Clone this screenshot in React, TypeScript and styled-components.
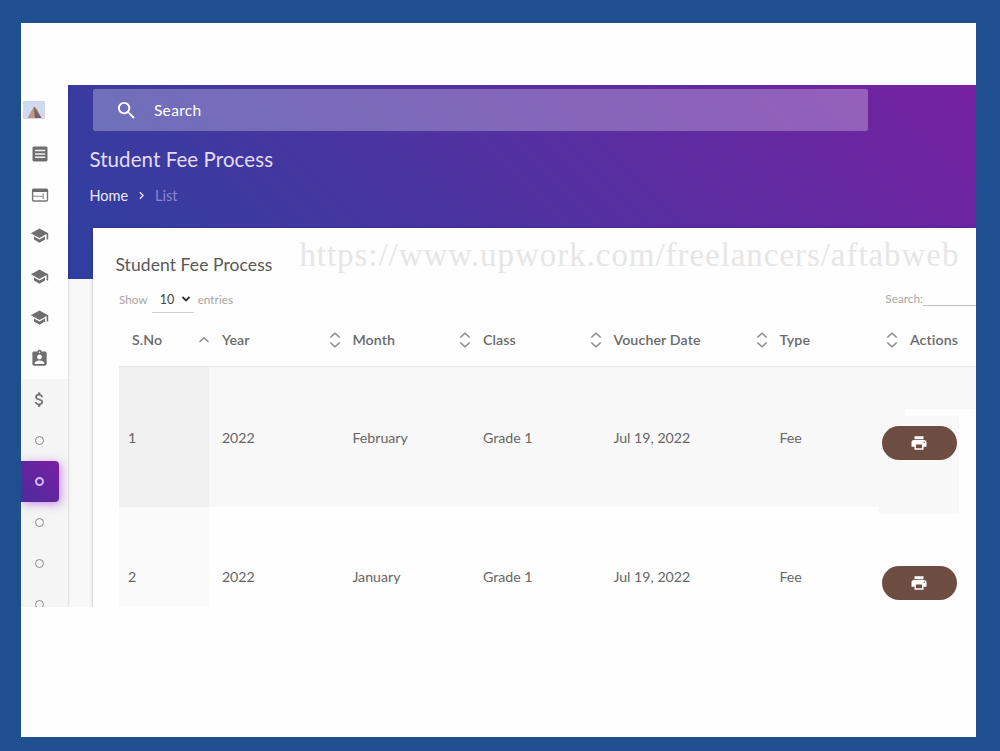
import styled, { createGlobalStyle } from 'styled-components';
import {
  MdSearch,
  MdSchool,
  MdAssignmentInd,
  MdAttachMoney,
  MdPrint,
  MdChevronRight,
} from 'react-icons/md';

const columns = ['S.No', 'Year', 'Month', 'Class', 'Voucher Date', 'Type', 'Actions'];

const rows = [
  { no: '1', year: '2022', month: 'February', grade: 'Grade 1', date: 'Jul 19, 2022', type: 'Fee' },
  { no: '2', year: '2022', month: 'January', grade: 'Grade 1', date: 'Jul 19, 2022', type: 'Fee' },
];

const ListIcon = () => (
  <svg width="18" height="18" viewBox="0 0 18 18">
    <rect x="1.5" y="1.5" width="15" height="15" rx="1.4" fill="#6f6f6f" />
    <path d="M4 5.5h10.2M4 8.9h10.2M4 12.3h10.2" stroke="#f4f4f4" strokeWidth="1.5" />
  </svg>
);

const LayoutIcon = () => (
  <svg width="18" height="18" viewBox="0 0 18 18">
    <rect x="1.6" y="3.2" width="14.9" height="11.8" rx="1.2" fill="none" stroke="#777" strokeWidth="1.4" />
    <path d="M1.2 4.6h15.6" stroke="#6c6c6c" strokeWidth="2.8" />
    <path d="M2 10.3h9.5M12.2 7.5v5.5" stroke="#888" strokeWidth="1.1" />
  </svg>
);

const Logo = () => (
  <svg width="22" height="18" viewBox="0 0 22 18">
    <rect width="22" height="18" fill="#cfdaef" />
    <path d="M4.5 17L11 5.5L14 8l4.5 9z" fill="#c09584" />
    <path d="M10.8 5.5L18.5 17H12z" fill="#75606c" />
  </svg>
);

const SortIcon = ({ single }: { single?: boolean }) => (
  <svg width="12" height="18" viewBox="0 0 12 18" fill="none" stroke="#8a8a8a" strokeWidth="1.5">
    {single ? (
      <path d="M1.5 11l4.5-4.3L10.5 11" />
    ) : (
      <>
        <path d="M1.3 6.5L6 2.2l4.700 4.300" />
        <path d="M1.3 11.500L6 15.800l4.700-4.300" />
      </>
    )}
  </svg>
);

const App = () => {
  return (
    <Frame>
      <GlobalStyle />
      <Paper>
        <Screen>
          <Sidebar>
            <LogoItem><Logo /></LogoItem>
            <NavItem><ListIcon /></NavItem>
            <NavItem><LayoutIcon /></NavItem>
            <NavItem><MdSchool size={19} /></NavItem>
            <NavItem><MdSchool size={19} /></NavItem>
            <NavItem><MdSchool size={19} /></NavItem>
            <NavItem><MdAssignmentInd size={19} /></NavItem>
            <SubMenu>
              <NavItem><MdAttachMoney size={19} /></NavItem>
              <NavItem><Dot /></NavItem>
              <NavItem $active><Dot $active /></NavItem>
              <NavItem><Dot /></NavItem>
              <NavItem><Dot /></NavItem>
              <NavItem><Dot /></NavItem>
            </SubMenu>
          </Sidebar>
          <Main>
            <SearchBar>
              <MdSearch size={23} />
              <span>Search</span>
            </SearchBar>
            <PageTitle>Student Fee Process</PageTitle>
            <Breadcrumbs>
              <span>Home</span>
              <MdChevronRight size={15} />
              <Muted>List</Muted>
            </Breadcrumbs>
            <Card>
              <CardHead>
                <CardTitle>Student Fee Process</CardTitle>
                <Watermark>https://www.upwork.com/freelancers/aftabweb</Watermark>
              </CardHead>
              <Controls>
                <span>Show</span>
                <PageSize>
                  10
                  <svg width="10" height="8" viewBox="0 0 10 8">
                    <path d="M1.5 2l3.5 3.5L8.5 2" fill="none" stroke="#333" strokeWidth="1.8" />
                  </svg>
                </PageSize>
                <span>entries</span>
                <Filter>
                  Search:
                  <FilterLine />
                </Filter>
              </Controls>
              <Table>
                <HeadRow>
                  {columns.map((name, i) => (
                    <HeadCell key={name}>
                      {name}
                      {i < columns.length - 1 && <SortIcon single={i === 0} />}
                    </HeadCell>
                  ))}
                </HeadRow>
                {rows.map((row, i) => (
                  <Row key={row.no} $odd={i === 0}>
                    <NoCell $odd={i === 0}>{row.no}</NoCell>
                    <Cell>{row.year}</Cell>
                    <Cell>{row.month}</Cell>
                    <Cell>{row.grade}</Cell>
                    <Cell>{row.date}</Cell>
                    <Cell>{row.type}</Cell>
                    <ActionCell>
                      {i === 0 && (
                        <>
                          <Blank />
                          <Patch />
                        </>
                      )}
                      <PrintButton><MdPrint size={18} /></PrintButton>
                    </ActionCell>
                  </Row>
                ))}
              </Table>
            </Card>
          </Main>
        </Screen>
      </Paper>
    </Frame>
  );
};

const GlobalStyle = createGlobalStyle`
  * {
    box-sizing: border-box;
  }

  body {
    margin: 0;
    overflow: hidden;
    font-family: Lato, "Open Sans", sans-serif;
  }

  svg {
    display: block;
    flex-shrink: 0;
  }
`;

const Frame = styled.div`
  width: 1000px;
  height: 751px;
  padding: 22.5px 24px 14.5px 21.4px;
  background: #1f4f8f;
`;

const Paper = styled.div`
  height: 100%;
  padding-top: 62.9px;
  background: #fefefe;
`;

const Screen = styled.div`
  display: flex;
  height: 521.2px;
  overflow: hidden;
`;

const Sidebar = styled.div`
  position: relative;
  z-index: 1;
  display: flex;
  flex-direction: column;
  flex-shrink: 0;
  width: 47px;
  color: #6f6f6f;
  box-shadow: 0 0 3px rgba(0, 0, 0, 0.2);
  background: #fefefe;
`;

const LogoItem = styled.div`
  flex-shrink: 0;
  height: 48px;
  padding: 16px 0 0 1.5px;
`;

const NavItem = styled.div<{ $active?: boolean }>`
  display: flex;
  align-items: center;
  justify-content: center;
  flex-shrink: 0;
  width: ${({ $active }) => ($active ? '37.5px' : '37px')};
  height: 41px;
  padding-right: ${({ $active }) => ($active ? '0.5px' : '0')};
  border-radius: 0 4px 4px 0;
  background: ${({ $active }) => ($active ? 'linear-gradient(45deg, #4a2c9c, #7b1fa2)' : 'none')};
  box-shadow: ${({ $active }) => ($active ? '2px 2px 10px rgba(156, 39, 206, 0.5)' : 'none')};
`;

const Dot = styled.div<{ $active?: boolean }>`
  width: 9px;
  height: 9px;
  border: ${({ $active }) => ($active ? '2px solid #d3b8f3' : '1px solid #8a8a8a')};
  border-radius: 50%;
`;

const SubMenu = styled.div`
  flex: 1;
  background: #f5f5f5;
`;

const Main = styled.div`
  flex: 1;
  min-width: 0;
  padding: 4px 0 0 24.5px;
  background: linear-gradient(45deg, #303f9f 4%, #7b1fa2 107%) no-repeat 0 0 / 100% 194px, #f8f8f8;
`;

const SearchBar = styled.div`
  display: flex;
  align-items: center;
  gap: 16px;
  width: 775.5px;
  height: 42px;
  padding-left: 22px;
  border-radius: 2px;
  color: #fff;
  font-size: 15.5px;
  letter-spacing: 0.35px;
  background: rgba(255, 255, 255, 0.27);
`;

const PageTitle = styled.div`
  margin: 14px 0 0 -3.5px;
  font-size: 20.5px;
  line-height: 28px;
  letter-spacing: 0.08px;
  color: #e4dcf5;
`;

const Breadcrumbs = styled.div`
  display: flex;
  align-items: center;
  gap: 6px;
  height: 20px;
  margin: 12.5px 0 0 -3.5px;
  font-size: 14.5px;
  color: #eee8fa;
`;

const Muted = styled.span`
  color: #8f84c4;
`;

const Card = styled.div`
  height: 400px;
  margin-top: 22px;
  padding: 0 0 0 26px;
  background: #fefefe;
  box-shadow: 0 0 3px rgba(0, 0, 0, 0.25);
`;

const CardHead = styled.div`
  display: flex;
  align-items: center;
  height: 59px;
  margin-left: -3.5px;
  white-space: nowrap;
`;

const CardTitle = styled.div`
  width: 184px;
  padding-top: 14px;
  font-size: 17.5px;
  letter-spacing: 0.08px;
  color: #585858;
`;

const Watermark = styled.div`
  padding-bottom: 3px;
  font-family: "Liberation Serif", serif;
  font-size: 33px;
  letter-spacing: 0.95px;
  color: #e6e6e6;
`;

const Controls = styled.div`
  display: flex;
  align-items: center;
  height: 26px;
  font-size: 11.8px;
  color: #a6a6a6;
`;

const PageSize = styled.div`
  display: flex;
  align-items: center;
  justify-content: space-between;
  width: 42px;
  height: 26px;
  margin: 0 4px;
  padding: 0 3px 0 8px;
  border-bottom: 1px solid #d0d0d0;
  font-size: 12.5px;
  color: #444;
`;

const Filter = styled.div`
  display: flex;
  align-items: flex-end;
  margin: 0 0 8px auto;
`;

const FilterLine = styled.div`
  width: 53px;
  height: 20px;
  border-bottom: 1px solid #bdbdbd;
`;

const Table = styled.div`
  font-size: 14.2px;
  color: #666;
`;

const HeadRow = styled.div`
  display: grid;
  grid-template-columns: 90px 130.5px 130.5px 130.5px 166px 130.5px 1fr;
  height: 54px;
  border-bottom: 1px solid #e6e6e6;
`;

const HeadCell = styled.div`
  display: flex;
  align-items: center;
  justify-content: space-between;
  padding: 1px 0 0 13px;
  white-space: nowrap;
  font-weight: 600;
  letter-spacing: 0.12px;
  color: #6a6a6a;

  svg {
    margin-right: -1.5px;
  }
`;

const Row = styled.div<{ $odd: boolean }>`
  display: grid;
  grid-template-columns: 90px 130.5px 130.5px 130.5px 166px 130.5px 1fr;
  height: 139.7px;
  background: ${({ $odd }) => ($odd ? '#f8f8f8' : '#fefefe')};
`;

const Cell = styled.div`
  display: flex;
  align-items: center;
  padding: 1px 0 0 13px;
`;

const NoCell = styled(Cell)<{ $odd: boolean }>`
  padding-left: 9px;
  background: ${({ $odd }) => ($odd ? '#f0f0f0' : '#fafafa')};
`;

const ActionCell = styled.div`
  position: relative;
  display: flex;
  align-items: center;
  padding-top: 13px;
`;

/* the first row's fill ends early here and hangs a little below the row */
const Blank = styled.div`
  position: absolute;
  left: 9px;
  right: 0;
  top: 42px;
  bottom: 0;
  background: #fefefe;
`;

const Patch = styled.div`
  position: absolute;
  left: -18px;
  top: 49px;
  width: 80px;
  height: 98px;
  background: #f8f8f8;
`;

const PrintButton = styled.div`
  position: relative;
  display: flex;
  align-items: center;
  justify-content: center;
  width: 75px;
  height: 34px;
  margin-left: -15px;
  border-radius: 17px;
  color: #fff;
  background: #6d4c41;
`;

export default App;
